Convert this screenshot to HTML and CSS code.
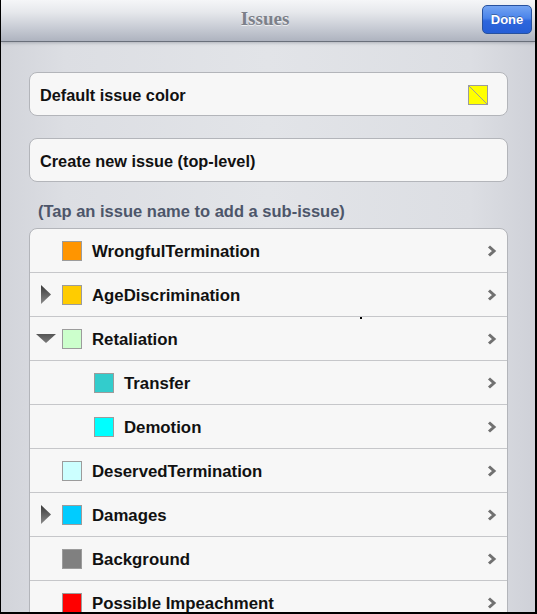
FILE: index.html
```html
<!DOCTYPE html>
<html>
<head>
<meta charset="utf-8">
<link rel="stylesheet" href="styles.css">
</head>
<body>
<div class="screen">
  <header class="navbar">
    <span></span>
    <h1 class="title">Issues</h1>
    <button class="done">Done</button>
  </header>
  <main class="content">
    <div class="card card-first">
      <span class="card-label">Default issue color</span>
      <span class="default-swatch">
        <svg width="20" height="20" viewBox="0 0 20 20"><rect x="0.5" y="0.5" width="19" height="19" fill="#ffff00" stroke="#9c9c9c"/><line x1="1" y1="1" x2="19" y2="19" stroke="#9a9a9a" stroke-width="1"/></svg>
      </span>
    </div>
    <div class="card card-last">
      <span class="card-label">Create new issue (top-level)</span>
    </div>
    <p class="caption">(Tap an issue name to add a sub-issue)</p>
    <ul class="list">
      <li class="row">
        <span class="toggle"></span>
        <span class="swatch" style="background:#ff9500"></span>
        <span class="name">WrongfulTermination</span>
        <svg class="chev" width="10" height="12" viewBox="0 0 10 12"><polyline points="2,1.5 7,6 2,10.5" fill="none" stroke="#717171" stroke-width="3"/></svg>
      </li>
      <li class="row">
        <span class="toggle">
          <svg width="10" height="19" viewBox="0 0 10 19"><defs><linearGradient id="gr" x1="0" y1="0" x2="0" y2="1"><stop offset="0" stop-color="#3a3a3a"/><stop offset="1" stop-color="#8a8a8a"/></linearGradient></defs><polygon points="0,0 10,9.5 0,19" fill="url(#gr)"/></svg>
        </span>
        <span class="swatch" style="background:#ffcc00"></span>
        <span class="name">AgeDiscrimination</span>
        <svg class="chev" width="10" height="12" viewBox="0 0 10 12"><polyline points="2,1.5 7,6 2,10.5" fill="none" stroke="#717171" stroke-width="3"/></svg>
      </li>
      <li class="row">
        <span class="toggle">
          <svg width="20" height="9" viewBox="0 0 20 9"><defs><linearGradient id="gd" x1="0" y1="0" x2="0" y2="1"><stop offset="0" stop-color="#555"/><stop offset="1" stop-color="#7a7a7a"/></linearGradient></defs><polygon points="0,0 20,0 10,9" fill="url(#gd)"/></svg>
        </span>
        <span class="swatch" style="background:#ccffcc"></span>
        <span class="name">Retaliation</span>
        <svg class="chev" width="10" height="12" viewBox="0 0 10 12"><polyline points="2,1.5 7,6 2,10.5" fill="none" stroke="#717171" stroke-width="3"/></svg>
        <span class="dot"></span>
      </li>
      <li class="row sub">
        <span class="toggle"></span>
        <span class="swatch" style="background:#33cccc"></span>
        <span class="name">Transfer</span>
        <svg class="chev" width="10" height="12" viewBox="0 0 10 12"><polyline points="2,1.5 7,6 2,10.5" fill="none" stroke="#717171" stroke-width="3"/></svg>
      </li>
      <li class="row sub">
        <span class="toggle"></span>
        <span class="swatch" style="background:#00ffff"></span>
        <span class="name">Demotion</span>
        <svg class="chev" width="10" height="12" viewBox="0 0 10 12"><polyline points="2,1.5 7,6 2,10.5" fill="none" stroke="#717171" stroke-width="3"/></svg>
      </li>
      <li class="row">
        <span class="toggle"></span>
        <span class="swatch" style="background:#ccffff"></span>
        <span class="name">DeservedTermination</span>
        <svg class="chev" width="10" height="12" viewBox="0 0 10 12"><polyline points="2,1.5 7,6 2,10.5" fill="none" stroke="#717171" stroke-width="3"/></svg>
      </li>
      <li class="row">
        <span class="toggle">
          <svg width="10" height="19" viewBox="0 0 10 19"><polygon points="0,0 10,9.5 0,19" fill="url(#gr)"/></svg>
        </span>
        <span class="swatch" style="background:#00ccff"></span>
        <span class="name">Damages</span>
        <svg class="chev" width="10" height="12" viewBox="0 0 10 12"><polyline points="2,1.5 7,6 2,10.5" fill="none" stroke="#717171" stroke-width="3"/></svg>
      </li>
      <li class="row">
        <span class="toggle"></span>
        <span class="swatch" style="background:#808080"></span>
        <span class="name">Background</span>
        <svg class="chev" width="10" height="12" viewBox="0 0 10 12"><polyline points="2,1.5 7,6 2,10.5" fill="none" stroke="#717171" stroke-width="3"/></svg>
      </li>
      <li class="row">
        <span class="toggle"></span>
        <span class="swatch" style="background:#ff0000"></span>
        <span class="name">Possible Impeachment</span>
        <svg class="chev" width="10" height="12" viewBox="0 0 10 12"><polyline points="2,1.5 7,6 2,10.5" fill="none" stroke="#717171" stroke-width="3"/></svg>
      </li>
    </ul>
  </main>
</div>
</body>
</html>
```

FILE: styles.css
```css
html, body {
  margin: 0;
  padding: 0;
  background: #000;
}

.screen {
  width: 537px;
  height: 614px;
  box-sizing: border-box;
  border-left: 1px solid #000;
  border-right: 2px solid #000;
  border-bottom: 2px solid #000;
  overflow: hidden;
  background: linear-gradient(to right, #d2d4da 0%, #dcdee3 12%, #e2e4e8 50%, #dcdee3 88%, #cfd1d8 100%);
  font-family: "Liberation Sans", Arial, sans-serif;
}

.navbar {
  height: 41px;
  border-bottom: 1px solid #6a707b;
  background: linear-gradient(to bottom, #f5f6f8 0%, #e6e8ec 30%, #c6cad3 70%, #aeb3bf 100%);
  display: grid;
  grid-template-columns: 1fr auto 1fr;
  align-items: center;
  box-shadow: 0 1px 3px rgba(80, 86, 98, 0.35);
  position: relative;
}

.title {
  margin: -3px 6px 0 0;
  font-family: "Liberation Serif", "Times New Roman", serif;
  font-weight: bold;
  font-size: 19px;
  color: #7c8089;
  text-shadow: 0 1px 0 rgba(255, 255, 255, 0.7);
}

.done {
  justify-self: end;
  margin-right: 3px;
  margin-top: -2px;
  width: 50px;
  height: 29px;
  border: 1px solid #27519e;
  border-radius: 5px;
  background: linear-gradient(to bottom, #74a4f2 0%, #4a84ea 45%, #2d66dc 55%, #255ed6 100%);
  color: #fff;
  font-family: "Liberation Sans", Arial, sans-serif;
  font-weight: bold;
  font-size: 13px;
  padding: 0;
  text-shadow: 0 -1px 0 rgba(0, 0, 0, 0.3);
}

.content {
  padding: 30px 27px 0 28px;
}

.card {
  height: 44px;
  box-sizing: border-box;
  border: 1px solid #b3b5ba;
  border-radius: 8px;
  background: #f7f7f7;
  display: flex;
  align-items: center;
  padding: 0 19px 0 10px;
  margin-bottom: 22px;
}

.card-last {
  margin-bottom: 19px;
}

.card-label {
  flex: 1;
  padding-top: 2px;
  font-weight: bold;
  font-size: 16.3px;
  color: #111;
}

.default-swatch {
  display: flex;
  width: 20px;
  height: 20px;
  margin-top: 1px;
}

.caption {
  margin: 0 0 6px 9px;
  height: 21px;
  line-height: 21px;
  font-weight: bold;
  font-size: 16.5px;
  color: #4d566a;
}

.list {
  list-style: none;
  margin: 0;
  padding: 0;
  border: 1px solid #b3b5ba;
  border-radius: 8px 8px 0 0;
  background: #f7f7f7;
}

.row {
  position: relative;
  height: 43px;
  border-bottom: 1px solid #c6c7ca;
  display: flex;
  align-items: center;
}

.toggle {
  width: 31px;
  display: flex;
  justify-content: center;
  align-items: center;
}

.swatch {
  width: 18px;
  height: 18px;
  border: 1px solid #9c9c9c;
  margin-left: 1px;
  margin-right: 10px;
}

.sub .swatch {
  margin-left: 33px;
}

.name {
  flex: 1;
  padding-top: 2px;
  font-weight: bold;
  font-size: 16.8px;
  color: #111;
}

.chev {
  margin-right: 10px;
}

.dot {
  position: absolute;
  left: 330px;
  top: 0;
  width: 2px;
  height: 2px;
  background: #000;
}
```
